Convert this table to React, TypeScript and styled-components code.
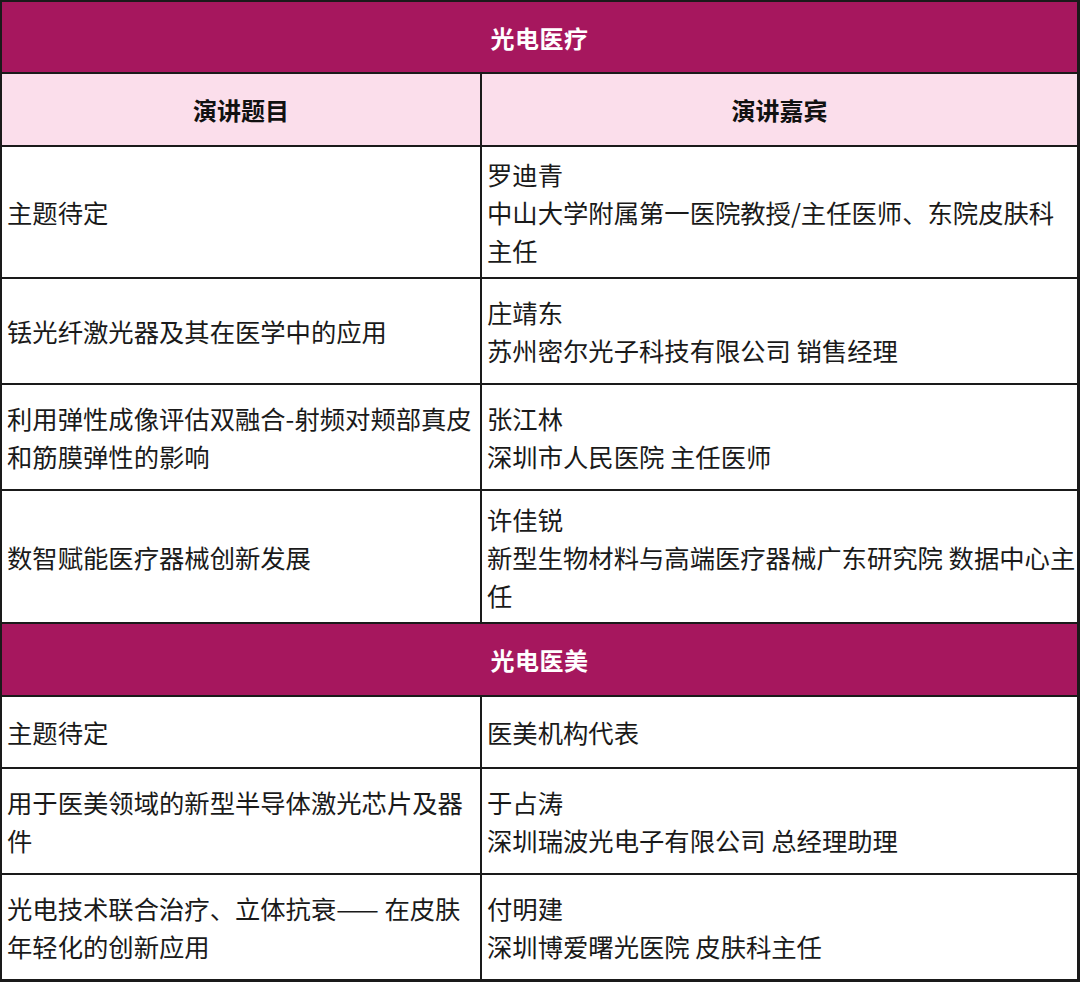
import React from 'react'
import styled, { createGlobalStyle } from 'styled-components'

const GlobalStyle = createGlobalStyle`
  html, body {
    margin: 0;
    padding: 0;
    background: #ffffff;
  }
  body {
    font-family: 'Noto Sans CJK SC', 'Noto Sans', sans-serif;
  }
`

const Table = styled.div`
  width: 1080px;
  box-sizing: border-box;
  display: flex;
  flex-direction: column;
  gap: 2px;
  padding: 2px 3px 3px 2px;
  background: #1a1a1a;
`

const Row = styled.div<{ $h: number }>`
  display: grid;
  grid-template-columns: 478px 1fr;
  gap: 2px;
  min-height: ${(p) => p.$h}px;
`

const Section = styled.div<{ $h: number }>`
  display: flex;
  align-items: center;
  justify-content: center;
  min-height: ${(p) => p.$h}px;
  background: #a6175e;
  color: #ffffff;
  font-size: 24px;
  font-weight: 700;
  letter-spacing: 0.5px;
`

const HeadCell = styled.div`
  display: flex;
  align-items: center;
  justify-content: center;
  background: #fbdeeb;
  color: #111111;
  font-size: 24px;
  font-weight: 700;
`

const Cell = styled.div<{ $right?: boolean }>`
  display: flex;
  flex-direction: column;
  justify-content: center;
  background: #ffffff;
  color: #1a1a1a;
  font-size: 25.33px;
  line-height: 38px;
  padding: ${(p) => (p.$right ? '0 0 0 5px' : '0 5px 0 5px')};
`

type Talk = {
  topic: string
  name: string
  org?: string
  h: number
}

const medical: Talk[] = [
  {
    topic: '主题待定',
    name: '罗迪青',
    org: '中山大学附属第一医院教授/主任医师、东院皮肤科主任',
    h: 130,
  },
  {
    topic: '铥光纤激光器及其在医学中的应用',
    name: '庄靖东',
    org: '苏州密尔光子科技有限公司 销售经理',
    h: 104,
  },
  {
    topic: '利用弹性成像评估双融合-射频对颊部真皮和筋膜弹性的影响',
    name: '张江林',
    org: '深圳市人民医院 主任医师',
    h: 104,
  },
  {
    topic: '数智赋能医疗器械创新发展',
    name: '许佳锐',
    org: '新型生物材料与高端医疗器械广东研究院 数据中心主任',
    h: 131,
  },
]

const beauty: Talk[] = [
  { topic: '主题待定', name: '医美机构代表', h: 70 },
  {
    topic: '用于医美领域的新型半导体激光芯片及器件',
    name: '于占涛',
    org: '深圳瑞波光电子有限公司 总经理助理',
    h: 104,
  },
  {
    topic: '光电技术联合治疗、立体抗衰—— 在皮肤年轻化的创新应用',
    name: '付明建',
    org: '深圳博爱曙光医院 皮肤科主任',
    h: 104,
  },
]

function TalkRow({ talk }: { talk: Talk }) {
  return (
    <Row $h={talk.h}>
      <Cell>{talk.topic}</Cell>
      <Cell $right>
        <div>{talk.name}</div>
        {talk.org && <div>{talk.org}</div>}
      </Cell>
    </Row>
  )
}

export default function App() {
  return (
    <>
      <GlobalStyle />
      <Table>
        <Section $h={70}>光电医疗</Section>
        <Row $h={71}>
          <HeadCell>演讲题目</HeadCell>
          <HeadCell>演讲嘉宾</HeadCell>
        </Row>
        {medical.map((t) => (
          <TalkRow key={t.name} talk={t} />
        ))}
        <Section $h={71}>光电医美</Section>
        {beauty.map((t) => (
          <TalkRow key={t.name} talk={t} />
        ))}
      </Table>
    </>
  )
}
